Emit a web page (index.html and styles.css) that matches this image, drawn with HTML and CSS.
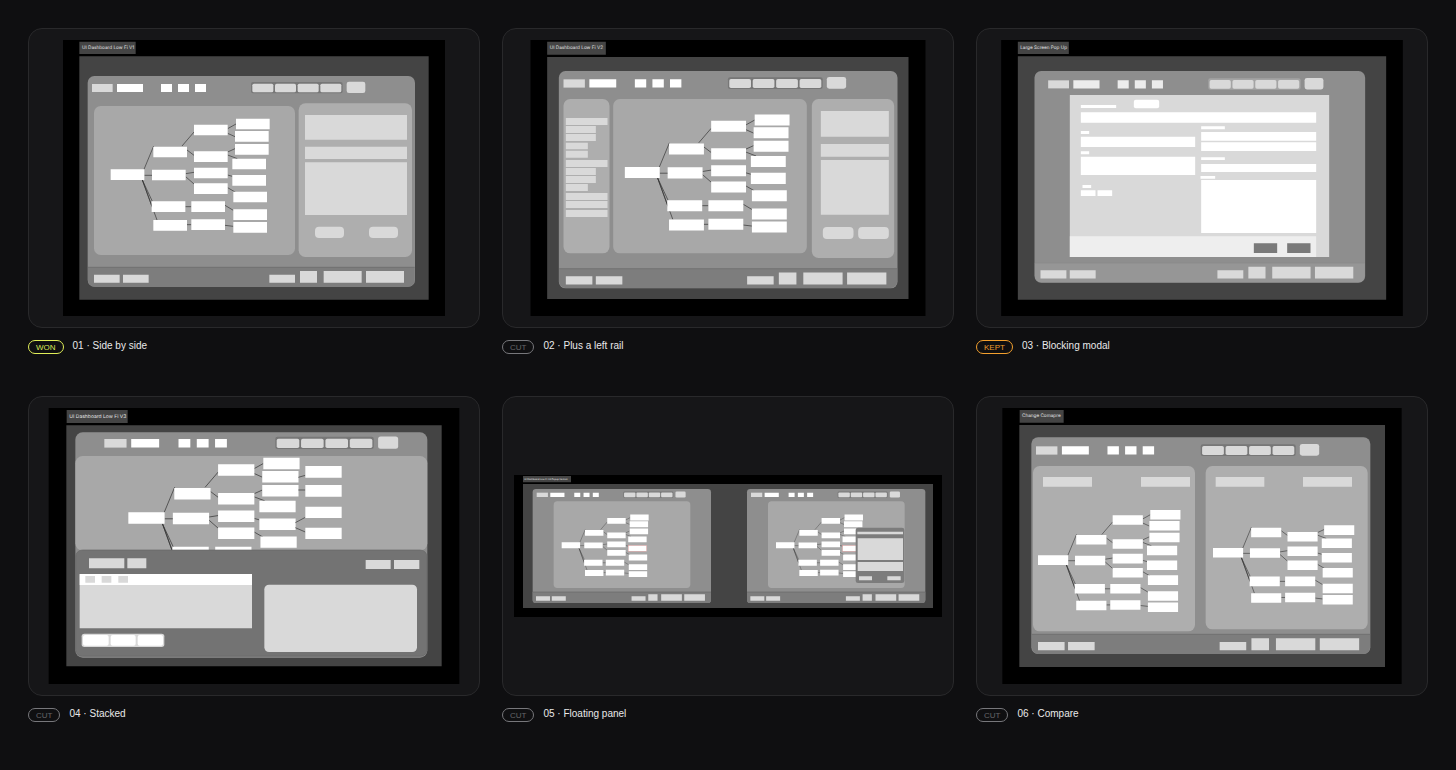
FILE: index.html
```html
<!DOCTYPE html>
<html lang="en">
<head>
<meta charset="utf-8">
<title>Layout explorations</title>
<link rel="stylesheet" href="styles.css">
</head>
<body>
<svg class="defs" aria-hidden="true">
  <defs>
    <g id="toolbar">
      <path class="soft" d="M0 0h62v24H0z"/>
      <path class="chip" d="M75 0h78v24H75zM207 0h33v24h-33zM258 0h33v24h-33zM309 0h33v24h-33z"/>
      <rect class="group" x="477" y="-6" width="275" height="34" rx="6"/>
      <g class="soft">
        <rect x="481" y="-1" width="63" height="26" rx="5"/>
        <rect x="549" y="-1" width="63" height="26" rx="5"/>
        <rect x="617" y="-1" width="63" height="26" rx="5"/>
        <rect x="685" y="-1" width="63" height="26" rx="5"/>
        <rect x="764" y="-7" width="56" height="34" rx="7"/>
      </g>
    </g>
    <path id="status" class="soft" d="M0 0h77v24H0zM87 0h77v24H87zM526 0h77v24h-77zM618-11h51v35h-51zM689-11h114v35H689zM816-11h114v35H816z"/>
    <g id="tree-base">
      <path class="edge" d="M100 0 129-70M101 18h24M95 32l29 80M95 32l30 64M95 32l44 120M229-58l21 16M225 13l25-4M225 22l25 22M224 112h18M229 166h13M351-52l22-10M351-43l29 11M351 17l14 4M351 55l24 14M343 108l25 15M343 168l25 3"/>
      <path class="node" d="M0 0h101v32H0zM128-68h101v32H128zM124 1h101v32H124zM123 96h101v32H123zM128 152h101v32H128zM250-54h101v32H250zM250-5h101v32H250zM250 42h101v32H250zM242 96h101v32H242zM242 150h101v32H242zM373-76h101v32H373zM365-32h101v32H365zM365 17h101v32H365zM368 67h101v32H368zM368 120h101v32H368zM368 158h101v32H368z"/>
    </g>
    <g id="tree">
      <use href="#tree-base"/>
      <path class="edge" d="M214-70l36-42M351-122l25-14M351-108l22 10"/>
      <path class="node" d="M250-134h101v32H250zM376-152h101v32H376zM373-115h101v32H373z"/>
    </g>
    <g id="small-window">
      <rect class="window" x="68" y="57" width="535" height="342" rx="10"/>
      <path class="footer" d="M68 366h535v23a10 10 0 0 1-10 10H78a10 10 0 0 1-10-10z"/>
      <path class="rule" d="M68 366h535"/>
      <rect class="canvas" x="131" y="94" width="410" height="260" rx="11"/>
      <use href="#toolbar" transform="translate(80 68) scale(.545)"/>
      <use href="#status" transform="translate(78 379) scale(.545)"/>
      <use href="#tree" transform="translate(155 217) scale(.547)"/>
      <rect class="selected" x="355" y="227" width="55" height="17"/>
    </g>
  </defs>
</svg>

<main class="board">
  <figure class="option">
    <div class="frame">
      <svg class="sketch" viewBox="129 60 1146 828" role="img" aria-label="Side by side wireframe">
        <path class="matte" d="M129 60h1146v828H129z"/>
        <path class="stage" d="M178 109h1048v730H178zM178 65h169v37H178z"/>
        <text class="name" x="186" y="87">UI Dashboard Low Fi V1</text>
        <rect class="window" x="203" y="168" width="982" height="632" rx="20"/>
        <path class="footer" d="M204 742h980v38a20 20 0 0 1-20 20H224a20 20 0 0 1-20-20z"/>
        <path class="rule" d="M204 742h980"/>
        <rect class="canvas" x="222" y="258" width="603" height="447" rx="20"/>
        <rect class="panel" x="836" y="250" width="340" height="461" rx="20"/>
        <path class="soft" d="M855 285h306v74H855zM855 380h306v37H855zM855 427h306v158H855z"/>
        <rect class="soft" x="885" y="620" width="87" height="34" rx="12"/>
        <rect class="soft" x="1047" y="620" width="87" height="34" rx="12"/>
        <use href="#toolbar" x="216" y="192"/>
        <use href="#status" x="222" y="764"/>
        <use href="#tree" x="272" y="448"/>
      </svg>
    </div>
    <figcaption class="caption"><span class="badge won">WON</span><span class="title">01 · Side by side</span></figcaption>
  </figure>

  <figure class="option">
    <div class="frame">
      <svg class="sketch" viewBox="92 60 1185 828" role="img" aria-label="Left rail wireframe">
        <path class="matte" d="M92 60h1185v828H92z"/>
        <path class="stage" d="M142 111h1084v726H142zM142 65h176v39H142z"/>
        <text class="name" x="150" y="88">UI Dashboard Low Fi V2</text>
        <rect class="window" x="177" y="153" width="1016" height="652" rx="20"/>
        <path class="footer" d="M178 746h1014v38a20 20 0 0 1-20 20H198a20 20 0 0 1-20-20z"/>
        <path class="rule" d="M178 746h1014"/>
        <rect class="panel" x="191" y="237" width="138" height="463" rx="20"/>
        <rect class="canvas" x="340" y="237" width="581" height="463" rx="20"/>
        <rect class="panel" x="936" y="237" width="247" height="477" rx="20"/>
        <path class="soft" d="M198 294h125v21H198zM198 318h90v21H198zM198 342h90v21H198zM198 368h66v20H198zM198 392h66v21H198zM198 420h125v21H198zM198 444h90v21H198zM198 468h90v21H198zM198 492h66v21H198zM198 519h125v21H198zM198 543h125v21H198zM198 570h125v21H198z"/>
        <path class="soft" d="M963 273h204v77H963zM963 372h204v38H963zM963 420h204v164H963z"/>
        <rect class="soft" x="969" y="621" width="92" height="36" rx="12"/>
        <rect class="soft" x="1075" y="621" width="92" height="36" rx="12"/>
        <use href="#toolbar" transform="translate(191 178) scale(1.034)"/>
        <use href="#status" transform="translate(198 769) scale(1.034)"/>
        <use href="#tree" transform="translate(375 441) scale(1.036)"/>
      </svg>
    </div>
    <figcaption class="caption"><span class="badge">CUT</span><span class="title">02 · Plus a left rail</span></figcaption>
  </figure>

  <figure class="option">
    <div class="frame">
      <svg class="sketch" viewBox="93 60 1205 828" role="img" aria-label="Blocking modal wireframe">
        <path class="matte" d="M93 60h1205v828H93z"/>
        <path class="stage" d="M143 109h1105v730H143zM143 65h153v37H143z"/>
        <text class="name" x="150" y="87">Large Screen Pop Up</text>
        <rect class="window" x="193" y="153" width="992" height="635" rx="20"/>
        <path class="footer pale" d="M194 729h990v38a20 20 0 0 1-20 20H214a20 20 0 0 1-20-20z"/>
        <path class="rule faint" d="M194 729h990"/>
        <use class="veiled" href="#toolbar" transform="translate(234 181) scale(1.007)"/>
        <use href="#status" transform="translate(211 751) scale(1.009)"/>
        <path class="soft" d="M299 225h778v486H299z"/>
        <path class="tray" d="M299 649h739v62H299z"/>
        <path class="node" d="M332 277h706v31H332zM332 255h106v9H332zM332 333h25v9h-25zM332 350h343v31H332zM332 394h25v9h-25zM332 410h343v55H332zM337 495h26v9h-26zM332 511h44v17h-44zM382 511h44v17h-44zM693 319h71v9h-71zM693 336h345v26H693zM693 367h345v26H693zM693 412h71v8h-71zM693 432h345v24H693zM691 468h44v8h-44zM693 480h345v159H693z"/>
        <rect class="node" x="491" y="239" width="76" height="26" rx="6"/>
        <path class="action" d="M851 670h70v29h-70zM951 670h70v29h-70z"/>
      </svg>
    </div>
    <figcaption class="caption"><span class="badge kept">KEPT</span><span class="title">03 · Blocking modal</span></figcaption>
  </figure>

  <figure class="option">
    <div class="frame">
      <svg class="sketch" viewBox="85 54 1232 828" role="img" aria-label="Stacked wireframe">
        <path class="matte" d="M85 54h1232v828H85z"/>
        <path class="stage" d="M138 106h1126v723H138zM139 60h183v39H139z"/>
        <text class="name large" x="147" y="83">UI Dashboard Low Fi V3</text>
        <rect class="window" x="165" y="127" width="1056" height="676" rx="22"/>
        <rect class="canvas" x="165" y="198" width="1056" height="284" rx="22"/>
        <use href="#toolbar" transform="translate(252 147) scale(1.075)"/>
        <svg x="165" y="198" width="1056" height="282" viewBox="165 198 1056 282">
          <use href="#tree" transform="translate(324 367) scale(1.077)"/>
          <path class="edge" d="M834 262l21-6M834 300h21M825 398l30-16M825 413l30 13"/>
          <path class="node" d="M855 228h109v35H855zM855 285h109v35H855zM855 350h109v34H855zM855 413h109v34H855z"/>
        </svg>
        <rect class="drawer" x="166" y="480" width="1054" height="319" rx="20"/>
        <path class="soft" d="M206 505h106v30H206zM321 505h57v30h-57zM1036 510h75v27h-75zM1121 510h76v27h-76zM178 553h517v162H178z"/>
        <path class="node" d="M178 552h517v33H178z"/>
        <path class="soft" d="M195 558h29v20h-29zM244 558h29v20h-29zM294 558h29v20h-29z"/>
        <rect class="soft" x="732" y="584" width="458" height="202" rx="14"/>
        <rect class="soft" x="184" y="731" width="248" height="40" rx="8"/>
        <rect class="node" x="188" y="735" width="77" height="32" rx="6"/>
        <rect class="node" x="271" y="735" width="75" height="32" rx="6"/>
        <rect class="node" x="352" y="735" width="76" height="32" rx="6"/>
      </svg>
    </div>
    <figcaption class="caption"><span class="badge">CUT</span><span class="title">04 · Stacked</span></figcaption>
  </figure>

  <figure class="option">
    <div class="frame">
      <svg class="sketch" viewBox="12 15 1284 426" role="img" aria-label="Floating panel wireframe">
        <path class="matte" d="M12 15h1284v426H12z"/>
        <path class="stage" d="M39 42h1230v372H39zM39 18h144v19H39z"/>
        <text class="name tiny" x="43" y="30">UI Dashboard Low Fi V4 Popup Version</text>
        <use href="#small-window"/>
        <use href="#small-window" x="643"/>
        <rect class="popup" x="1037" y="173" width="146" height="166" rx="7"/>
        <path class="soft" d="M1042 185h137v8h-137zM1043 205h136v65h-136zM1043 276h136v27h-136zM1047 319h39v12h-39zM1132 319h40v12h-40z"/>
      </svg>
    </div>
    <figcaption class="caption"><span class="badge">CUT</span><span class="title">05 · Floating panel</span></figcaption>
  </figure>

  <figure class="option">
    <div class="frame">
      <svg class="sketch" viewBox="97 54 1198 828" role="img" aria-label="Compare wireframe">
        <path class="matte" d="M97 54h1198v828H97z"/>
        <path class="stage" d="M148 105h1097v726H148zM149 60h132v38H149z"/>
        <text class="name" x="156" y="82">Change Comapre</text>
        <rect class="window" x="184" y="142" width="1017" height="650" rx="20"/>
        <path class="footer" d="M186 733h1014v39a20 20 0 0 1-20 20H206a20 20 0 0 1-20-20z"/>
        <path class="rule" d="M185 733h1016"/>
        <rect class="panel" x="189" y="228" width="486" height="496" rx="20"/>
        <rect class="panel" x="707" y="228" width="486" height="490" rx="20"/>
        <path class="soft" d="M219 261h147v29H219zM513 261h147v29H513zM737 261h146v29H737zM999 261h147v29H999z"/>
        <use href="#toolbar" transform="translate(198 169) scale(1.036)"/>
        <use href="#status" transform="translate(204 756) scale(1.036)"/>
        <use href="#tree" transform="translate(204 496) scale(.896)"/>
        <use href="#tree-base" transform="translate(729 474) scale(.894)"/>
      </svg>
    </div>
    <figcaption class="caption"><span class="badge">CUT</span><span class="title">06 · Compare</span></figcaption>
  </figure>
</main>
</body>
</html>
```
FILE: styles.css
```css
* { box-sizing: border-box; }

body {
  margin: 0;
  background: #0f0f11;
  color: #e9e9ea;
  font-family: "Liberation Sans", Arial, sans-serif;
}

.defs {
  position: absolute;
  width: 0;
  height: 0;
}

.board {
  display: grid;
  grid-template-columns: repeat(3, minmax(0, 1fr));
  gap: 42px 22px;
  padding: 28px;
}

.option {
  display: flex;
  flex-direction: column;
  gap: 12px;
  margin: 0;
}

.frame {
  padding: 11px;
  border: 1px solid #29292b;
  border-radius: 14px;
  background: #161618;
}

.sketch {
  display: block;
  width: 100%;
  aspect-ratio: 428 / 276;
}

.caption {
  display: flex;
  align-items: flex-start;
  gap: 9px;
}

.badge {
  padding: 1px 7px 0;
  border: 1px solid #77777b;
  border-radius: 7px;
  color: #66666a;
  font-size: 8px;
  line-height: 11px;
}

.badge.won { border-color: #e0ee58; color: #dbe957; }
.badge.kept { border-color: #f3a02e; color: #ed9c2d; }

.title {
  font-size: 10px;
  line-height: 12px;
}

/* Wireframe palette */
.matte { fill: #000; }
.stage { fill: #444; }
.window { fill: #8e8e8e; }
.canvas { fill: #a8a8a8; }
.panel { fill: #aeaeae; }
.footer { fill: #7d7d7d; }
.footer.pale { fill: #969696; }
.rule { fill: none; stroke: #686868; stroke-width: 2; }
.rule.faint { stroke: #898989; }
.drawer { fill: #737373; stroke: #686868; stroke-width: 2; }
.soft { fill: #d9d9d9; }
.chip { fill: var(--chip, #fff); }
.group { fill: var(--group, #777); }
.veiled { --chip: #ececec; --group: #a4a4a4; }
.tray { fill: #eee; }
.action { fill: #7a7a7a; }
.node { fill: #fff; }
.edge { fill: none; stroke: #333; stroke-width: 2; }
.selected { fill: none; stroke: #e98b8b; stroke-width: 1; }
.popup { fill: #7c7c7c; }

.name {
  fill: #e4e4e4;
  font-family: Inter, sans-serif;
  font-size: 14px;
  text-rendering: geometricPrecision;
}

.name.large { font-size: 15px; }
.name.tiny { font-size: 7px; }
```
